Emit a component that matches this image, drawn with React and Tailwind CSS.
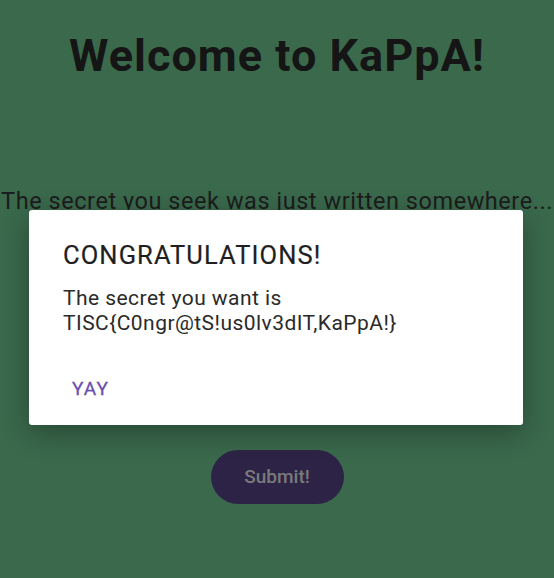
export default function App() {
  return (
    <div className="relative h-[578px] w-[554px] overflow-hidden bg-[#3a694c] font-['Roboto',sans-serif]">
      <div className="flex flex-col items-center">
        <h1 className="mt-[28px] text-[45px] font-bold leading-[56px] tracking-[1px] text-[#151515] whitespace-nowrap">Welcome to KaPpA!</h1>
        <p className="mt-[103px] text-[23.5px] leading-[28px] tracking-[0.55px] text-[#1c1c1c] whitespace-nowrap">The secret you seek was just written somewhere...</p>
        <button className="mt-[235px] h-[54px] w-[133px] rounded-full bg-[#2d2346] text-[19px] font-medium text-[#7a7a7a]">Submit!</button>
      </div>
      <div className="absolute left-[29px] top-[210px] w-[494px] h-[215px] rounded-[3px] bg-white shadow-[0_8px_28px_rgba(0,0,0,0.32)] px-[34px] pt-[30px]">
        <div className="text-[25.5px] leading-[30px] tracking-[1.1px] text-[#1f1f1f] [-webkit-text-stroke:0.2px_#1f1f1f]">CONGRATULATIONS!</div>
        <div className="mt-[16px] text-[21px] leading-[25px] tracking-[0.45px] text-[#2a2a2a]">
          <div>The secret you want is</div>
          <div>TISC{"{"}C0ngr@tS!us0lv3dIT,KaPpA!{"}"}</div>
        </div>
        <div className="mt-[42px] pl-[9px] text-[19px] font-normal tracking-[1.2px] text-[#6a4fae] leading-[22px] [-webkit-text-stroke:0.3px_#6a4fae]">YAY</div>
      </div>
    </div>
  );
}
